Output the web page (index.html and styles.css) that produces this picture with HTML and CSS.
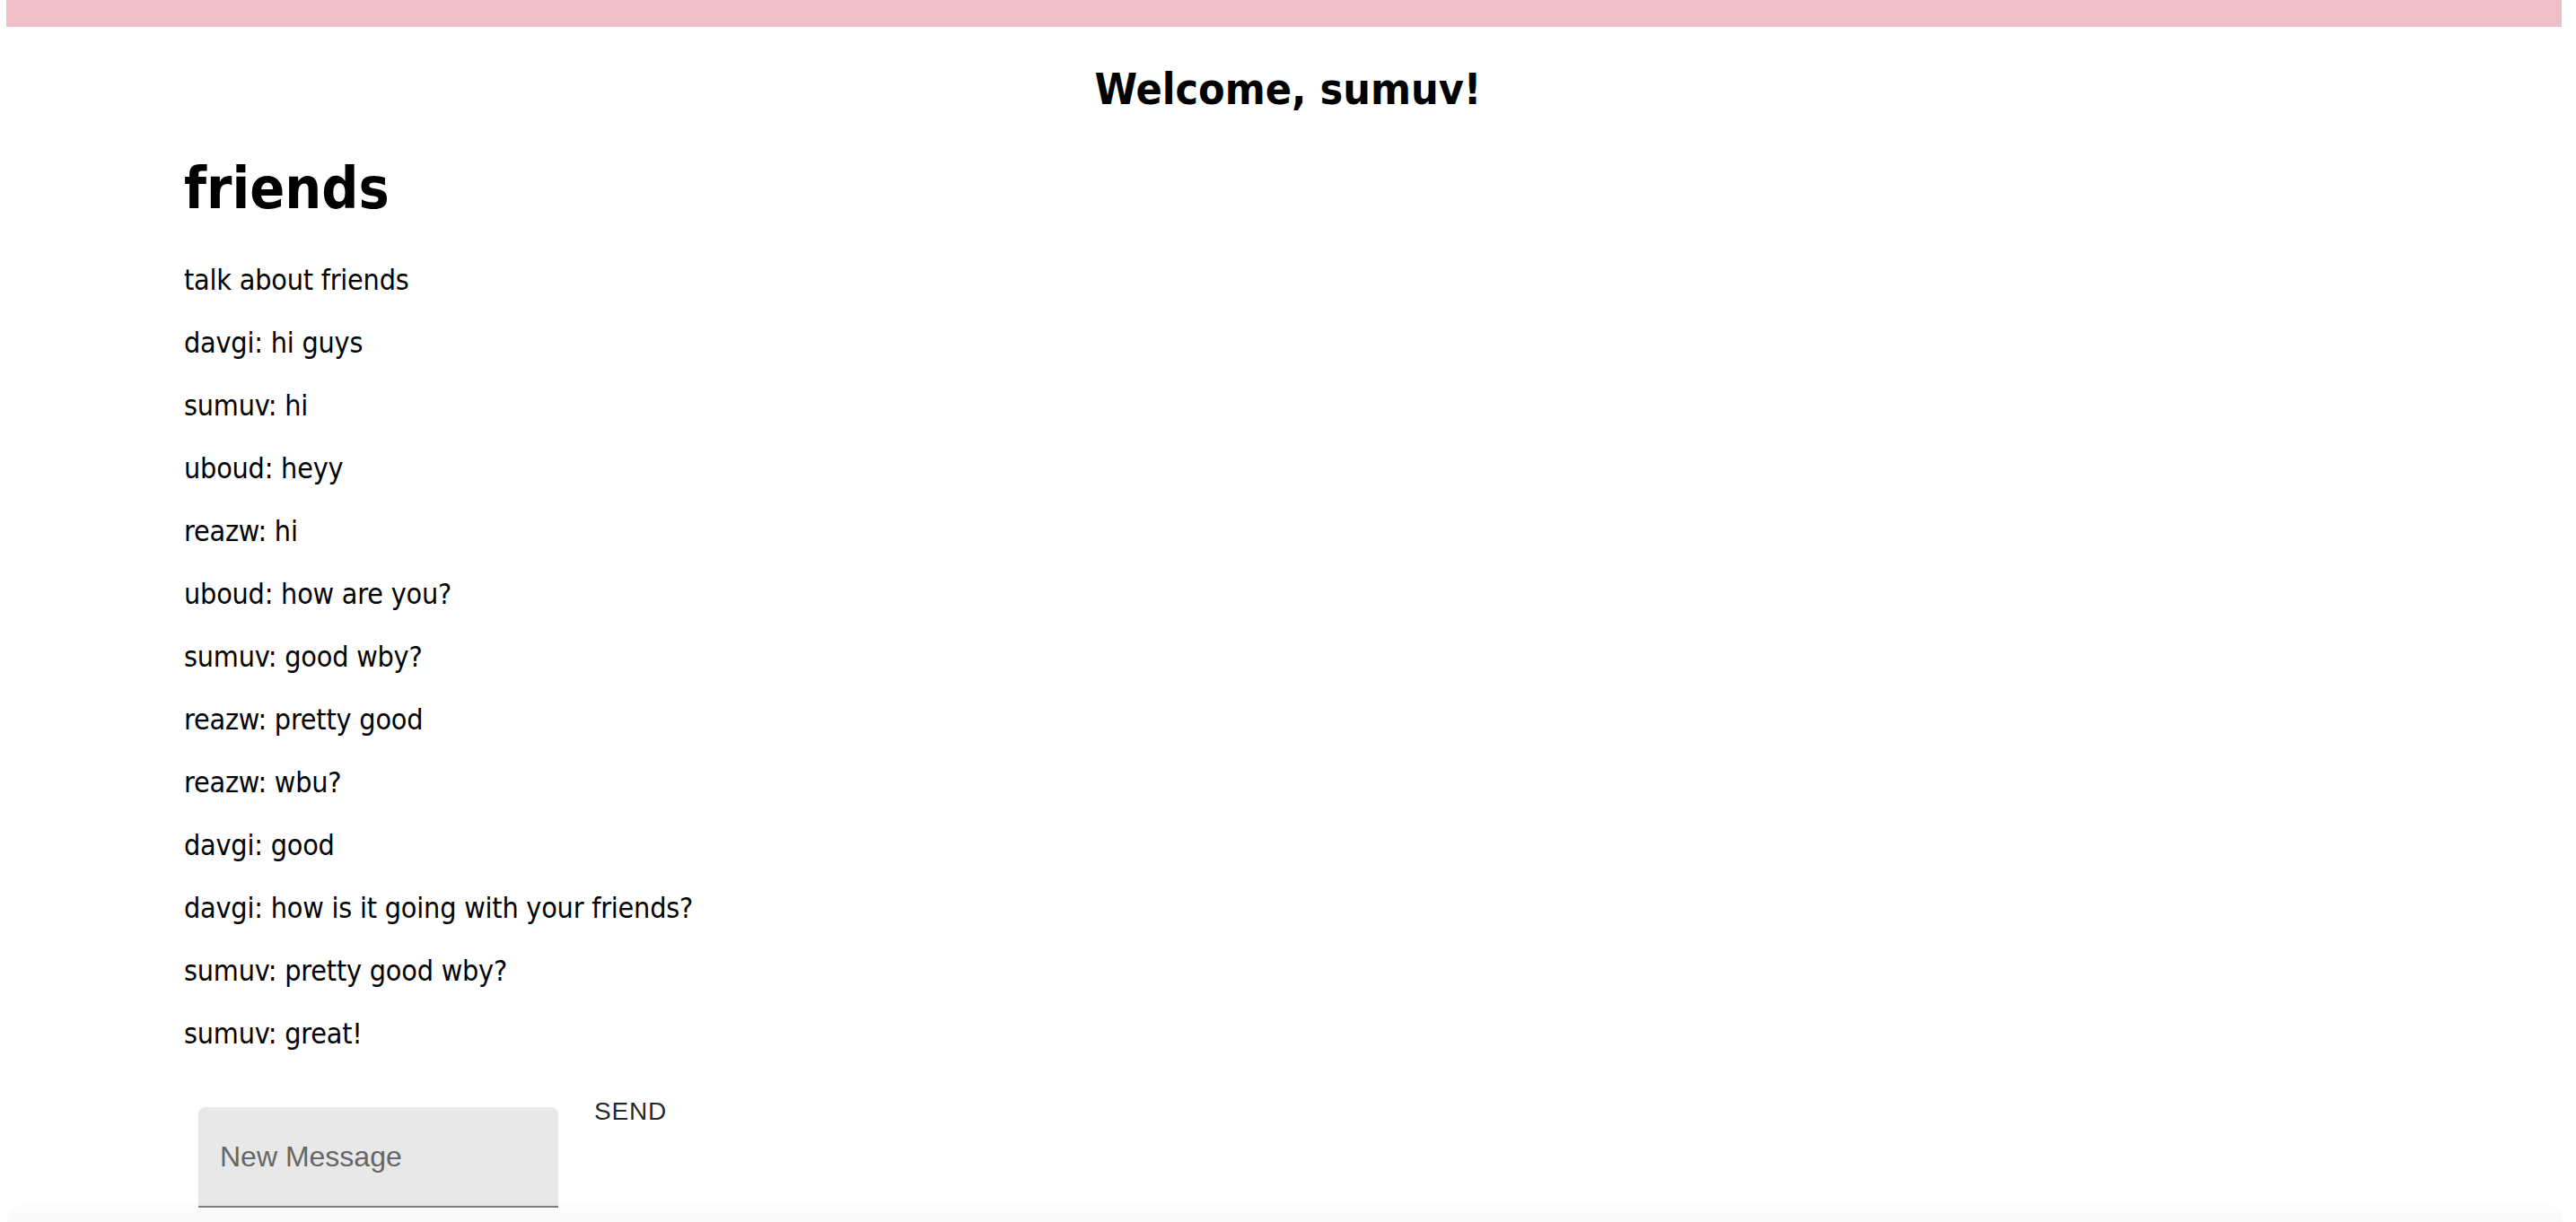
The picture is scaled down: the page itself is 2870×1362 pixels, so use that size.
FILE: index.html
```html
<!DOCTYPE html>
<html lang="en">
<head>
<meta charset="utf-8">
<title>Chat</title>
<link rel="stylesheet" href="styles.css">
</head>
<body>
<div class="topbar"></div>
<h2 class="welcome">Welcome, sumuv!</h2>
<main class="container">
  <h1 class="room-title">friends</h1>
  <p class="line">talk about friends</p>
  <p class="line">davgi: hi guys</p>
  <p class="line">sumuv: hi</p>
  <p class="line">uboud: heyy</p>
  <p class="line">reazw: hi</p>
  <p class="line">uboud: how are you?</p>
  <p class="line">sumuv: good wby?</p>
  <p class="line">reazw: pretty good</p>
  <p class="line">reazw: wbu?</p>
  <p class="line">davgi: good</p>
  <p class="line">davgi: how is it going with your friends?</p>
  <p class="line">sumuv: pretty good wby?</p>
  <p class="line">sumuv: great!</p>
  <form class="composer">
    <input class="msg-input" type="text" placeholder="New Message">
    <button class="send-btn" type="button">Send</button>
  </form>
</main>
<div class="bottom-fade"></div>
</body>
</html>
```
FILE: styles.css
```css
html, body {
  margin: 0;
  padding: 0;
  background: #ffffff;
}

body {
  font-family: "DejaVu Sans Condensed", "DejaVu Sans", sans-serif;
  font-stretch: condensed;
  color: #000;
}

.topbar {
  height: 30px;
  margin: 0 16px 0 7px;
  background: #efbfc9;
}

.welcome {
  margin: 40px 0;
  text-align: center;
  font-size: 48px;
  line-height: 58px;
  font-weight: bold;
}

.container {
  max-width: 2560px;
  margin: 0 auto;
  padding: 0 48px 0 50px;
  box-sizing: border-box;
}

.room-title {
  margin: 43px 0 43px;
  font-size: 64px;
  line-height: 79px;
  font-weight: bold;
}

.line {
  margin: 32px 0;
  font-size: 32px;
  line-height: 38px;
  letter-spacing: -0.2px;
}

.composer {
  display: flex;
  align-items: flex-start;
}

.msg-input {
  width: 401px;
  height: 112px;
  box-sizing: border-box;
  margin: 31px 16px 16px 16px;
  padding: 0 24px;
  border: none;
  border-bottom: 2px solid rgba(0, 0, 0, 0.45);
  border-radius: 8px 8px 0 0;
  background: #e8e8e8;
  font-family: "Liberation Sans", Arial, sans-serif;
  font-size: 32px;
  color: #222;
  outline: none;
}

.msg-input::placeholder {
  color: #666666;
  opacity: 1;
}

.send-btn {
  margin-left: 8px;
  padding: 11px 16px 12px;
  border: none;
  background: transparent;
  font-family: "Liberation Sans", Arial, sans-serif;
  font-size: 28px;
  line-height: 49px;
  letter-spacing: 0.8px;
  text-transform: uppercase;
  color: rgba(0, 0, 0, 0.87);
  cursor: pointer;
}

.bottom-fade {
  position: fixed;
  left: 8px;
  right: 15px;
  bottom: 0;
  height: 22px;
  border-radius: 40px 40px 0 0;
  background: linear-gradient(to bottom, rgba(0, 0, 0, 0.008), rgba(0, 0, 0, 0.018));
  pointer-events: none;
}
```
